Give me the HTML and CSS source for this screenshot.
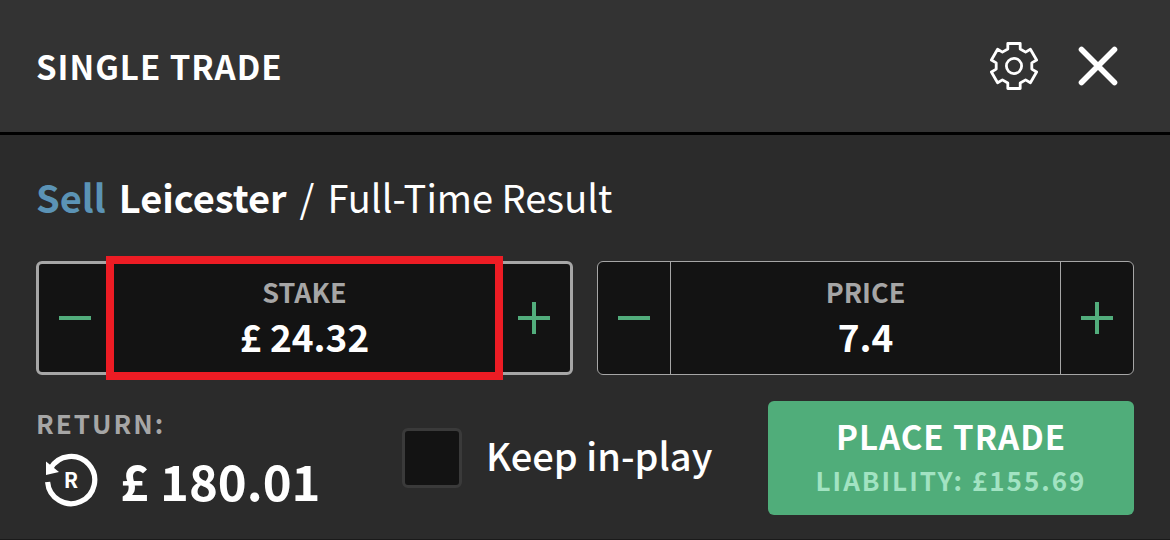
FILE: index.html
```html
<!DOCTYPE html>
<html lang="en">

<head>
  <meta charset="UTF-8" />
  <meta name="viewport" content="width=device-width, initial-scale=1" />
  <title>Single trade</title>
  <link rel="stylesheet" href="styles.css">
</head>

<body>
  <header class="header">
    <h1>SINGLE TRADE</h1>
    <div class="header-actions">
      <button class="icon-btn" type="button" aria-label="Settings">
        <svg width="48" height="48" viewBox="-24 -24 48 48" fill="none" stroke="#fff" stroke-width="2.8" stroke-linejoin="round">
          <path d="M-6.2 -22.5H6.2V-17L11.6 -13.9L16.4 -16.7L22.6 -6L17.8 -3.1V3.1L22.6 6L16.4 16.7L11.6 13.9L6.2 17V22.5H-6.2V17L-11.6 13.9L-16.4 16.7L-22.6 6L-17.8 3.1V-3.1L-22.6 -6L-16.4 -16.7L-11.6 -13.9L-6.2 -17Z" />
          <circle r="7.6" />
        </svg>
      </button>
      <button class="icon-btn" type="button" aria-label="Close">
        <svg width="40" height="40" viewBox="0 0 40 40" fill="none" stroke="#fff" stroke-width="5.6" stroke-linecap="round">
          <path d="M3.5 3.5L36.5 36.5M36.5 3.5L3.5 36.5" />
        </svg>
      </button>
    </div>
  </header>

  <main class="slip">
    <h2 class="selection">
      <span class="side">Sell</span>
      <strong>Leicester</strong>
      <span>/</span>
      <span>Full-Time Result</span>
    </h2>

    <div class="steppers">
      <div class="stepper active">
        <button class="step" type="button" aria-label="Decrease stake">
          <svg width="32" height="32" viewBox="0 0 32 32"><path d="M0 16H32" /></svg>
        </button>
        <div class="field highlight">
          <label for="stake">STAKE</label>
          <input id="stake" type="text" value="£ 24.32">
        </div>
        <button class="step" type="button" aria-label="Increase stake">
          <svg width="32" height="32" viewBox="0 0 32 32"><path d="M0 16H32M16 0V32" /></svg>
        </button>
      </div>

      <div class="stepper">
        <button class="step" type="button" aria-label="Decrease price">
          <svg width="32" height="32" viewBox="0 0 32 32"><path d="M0 16H32" /></svg>
        </button>
        <div class="field">
          <label for="price">PRICE</label>
          <input id="price" type="text" value="7.4">
        </div>
        <button class="step" type="button" aria-label="Increase price">
          <svg width="32" height="32" viewBox="0 0 32 32"><path d="M0 16H32M16 0V32" /></svg>
        </button>
      </div>
    </div>

    <div class="summary">
      <div class="return">
        <div class="return-label">RETURN:</div>
        <div class="return-value">
          <svg width="54" height="54" viewBox="0 0 54 54">
            <path d="M3.6 29A23.6 23.6 0 1 0 6.6 15.4" fill="none" stroke="#fff" stroke-width="5.2" />
            <path d="M2 8.5V22L15 19Z" fill="#fff" />
            <text x="27" y="35" text-anchor="middle">R</text>
          </svg>
          <span>£ 180.01</span>
        </div>
      </div>

      <label class="keep">
        <input type="checkbox">
        <span>Keep in-play</span>
      </label>

      <button class="place" type="button">
        <span class="place-title">PLACE TRADE</span>
        <span class="place-liability">LIABILITY: £155.69</span>
      </button>
    </div>
  </main>
</body>

</html>
```
FILE: styles.css
```css
* {
  box-sizing: border-box;
}

body {
  margin: 0;
  background-color: #2b2b2b;
  color: #fff;
  font-family: "Noto Sans CJK SC", "Open Sans", sans-serif;
}

button,
input {
  font-family: inherit;
  color: inherit;
}

button {
  padding: 0;
  border: none;
  background: none;
  cursor: pointer;
}

svg {
  display: block;
}

.header {
  display: flex;
  justify-content: space-between;
  align-items: center;
  padding: 42px 52px 42px 36px;
  background-color: #333;
  border-bottom: 3px solid #000;
}

h1 {
  margin: 0;
  font-size: 33px;
  line-height: 48px;
  font-weight: 700;
  letter-spacing: 1px;
}

.header-actions {
  display: flex;
  align-items: center;
  gap: 40px;
}

.slip {
  padding: 40px 36px 24px;
  border-bottom: 1px solid #1a1a1a;
}

.selection {
  display: flex;
  gap: 13px;
  margin: 0 0 42px;
  font-size: 38px;
  line-height: 44px;
  font-weight: 400;
}

.selection strong,
.side {
  font-weight: 700;
}

.side {
  color: #5b93b5;
}

.steppers {
  display: grid;
  grid-template-columns: 1fr 1fr;
  gap: 24px;
  margin-bottom: 26px;
}

.stepper {
  display: grid;
  grid-template-columns: 72px 1fr 72px;
  height: 114px;
  background-color: #131313;
  border: 1px solid #a6a6a6;
  border-radius: 6px;
}

.stepper.active {
  border-width: 3px;
}

.step {
  display: flex;
  align-items: center;
  justify-content: center;
}

.step path {
  fill: none;
  stroke: #52ad7c;
  stroke-width: 4;
}

.field {
  position: relative;
  display: flex;
  flex-direction: column;
  justify-content: center;
  min-width: 0;
  padding-bottom: 8px;
  border-left: 1px solid #a6a6a6;
  border-right: 1px solid #a6a6a6;
  text-align: center;
}

.highlight::after {
  content: "";
  position: absolute;
  inset: -8px -6px;
  border: 8px solid #ed1c24;
  pointer-events: none;
}

.field label {
  color: #a6a6a6;
  font-size: 27px;
  line-height: 44px;
  font-weight: 700;
}

.field input {
  width: 100%;
  height: 44px;
  padding: 0;
  border: none;
  outline: none;
  background: none;
  font-size: 37px;
  font-weight: 700;
  text-align: center;
}

.summary {
  display: grid;
  grid-template-columns: repeat(3, 1fr);
}

.return-label {
  color: #a6a6a6;
  font-size: 26px;
  line-height: 44px;
  font-weight: 700;
  letter-spacing: 2px;
}

.return-value {
  display: flex;
  align-items: center;
  gap: 22px;
  padding: 8px;
  font-size: 49px;
  line-height: 54px;
  font-weight: 700;
}

.return-value text {
  fill: #fff;
  font-size: 21px;
}

.keep {
  display: flex;
  align-items: center;
  gap: 24px;
  font-size: 38px;
  line-height: 48px;
  font-weight: 500;
  white-space: nowrap;
}

.keep input {
  appearance: none;
  width: 60px;
  height: 60px;
  margin: 0;
  background-color: #131313;
  border: 3px solid #3a3a3a;
  border-radius: 6px;
}

.keep span {
  padding-bottom: 6px;
}

.place {
  display: flex;
  flex-direction: column;
  align-items: center;
  justify-content: center;
  height: 114px;
  background-color: #50ad7a;
  border-radius: 6px;
  font-weight: 700;
}

.place-title {
  font-size: 33px;
  line-height: 44px;
  letter-spacing: 1px;
}

.place-liability {
  color: #a2e3c2;
  font-size: 26px;
  line-height: 44px;
  letter-spacing: 2px;
}
```
